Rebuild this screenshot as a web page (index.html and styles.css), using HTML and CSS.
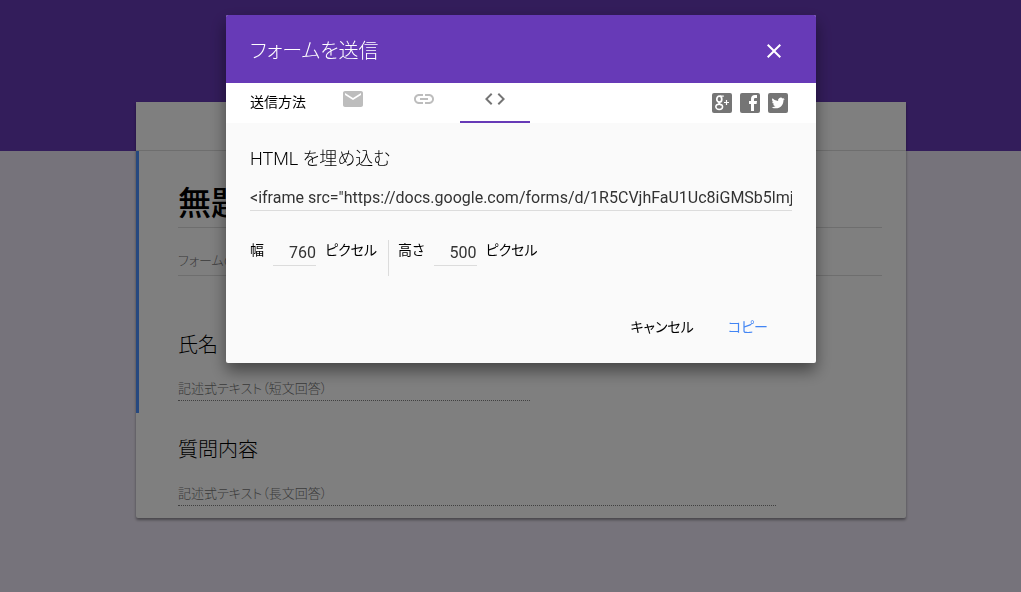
FILE: index.html
```html
<!DOCTYPE html>
<html lang="ja">
<head>
<meta charset="utf-8">
<title>フォームを送信</title>
<link rel="stylesheet" href="styles.css">
</head>
<body>
<main class="page">
  <div class="banner"></div>
  <div class="card">
    <div class="card-head"></div>
    <section class="section section-active">
      <input class="form-title" type="text" value="無題のフォーム" aria-label="フォームのタイトル">
      <input class="form-desc" type="text" placeholder="フォームの説明" aria-label="フォームの説明">
      <h2 class="question">氏名</h2>
      <p class="answer answer-short">記述式テキスト（短文回答）</p>
    </section>
    <section class="section">
      <h2 class="question">質問内容</h2>
      <p class="answer answer-long">記述式テキスト（長文回答）</p>
    </section>
  </div>
</main>

<div class="overlay">
  <div class="dialog" role="dialog" aria-modal="true" aria-labelledby="dialog-title">
    <header class="dialog-head">
      <h1 class="dialog-title" id="dialog-title">フォームを送信</h1>
      <button class="close" type="button" aria-label="閉じる">
        <svg width="24" height="24" viewBox="0 0 24 24" fill="currentColor"><path d="M19 6.41L17.59 5 12 10.59 6.41 5 5 6.41 10.59 12 5 17.59 6.41 19 12 13.41 17.59 19 19 17.59 13.41 12z"/></svg>
      </button>
    </header>
    <div class="toolbar">
      <span class="toolbar-label">送信方法</span>
      <div class="tabs" role="tablist">
        <button class="tab" type="button" role="tab" aria-label="メール">
          <svg width="24" height="24" viewBox="0 0 24 24" fill="currentColor"><path d="M20 4H4c-1.1 0-2 .9-2 2v12c0 1.100.9 2 2 2h16c1.100 0 2-.9 2-2V6c0-1.100-.9-2-2-2zm0 4l-8 5-8-5V6l8 5 8-5v2z"/></svg>
        </button>
        <button class="tab" type="button" role="tab" aria-label="リンク">
          <svg width="24" height="24" viewBox="0 0 24 24" fill="currentColor"><path d="M3.900 12c0-1.710 1.390-3.100 3.100-3.100h4V7H7c-2.760 0-5 2.240-5 5s2.240 5 5 5h4v-1.900H7c-1.710 0-3.100-1.390-3.100-3.100zM8 13h8v-2H8v2zm9-6h-4v1.900h4c1.710 0 3.100 1.390 3.100 3.100s-1.390 3.100-3.100 3.100h-4V17h4c2.760 0 5-2.240 5-5s-2.240-5-5-5z"/></svg>
        </button>
        <button class="tab tab-active" type="button" role="tab" aria-selected="true" aria-label="HTML を埋め込む">
          <svg width="24" height="24" viewBox="0 0 24 24" fill="currentColor"><path d="M9.400 16.600L4.800 12l4.600-4.600L8 6l-6 6 6 6 1.400-1.400zm5.200 0l4.600-4.600-4.600-4.600L16 6l6 6-6 6-1.400-1.400z"/></svg>
        </button>
      </div>
      <div class="share">
        <a class="share-link" href="#" aria-label="Google+">
          <svg width="20" height="20" viewBox="0 0 20 20"><rect width="20" height="20" rx="2" fill="#757575"/><g fill="none" stroke="#fff"><ellipse cx="7.300" cy="6.200" rx="2.500" ry="3" stroke-width="1.700"/><path d="M8 3.200h3.800" stroke-width="1.200"/><path d="M7.500 9.200c-1.500 1 .2 1.800 1.600 2.600" stroke-width="1.500"/><ellipse cx="7.200" cy="13.800" rx="3.400" ry="2.600" stroke-width="1.500"/><path d="M14.500 7v5M12 9.500h5" stroke-width="1.200"/></g></svg>
        </a>
        <a class="share-link" href="#" aria-label="Facebook">
          <svg width="20" height="20" viewBox="0 0 20 20"><rect width="20" height="20" rx="2" fill="#757575"/><path fill="#fff" d="M11 18v-7H9V8h2V6c0-2.500 1.500-4 3.800-4H17v3h-1.500C14.500 5 14 5.400 14 6.300V8h3l-.4 3H14v7z"/></svg>
        </a>
        <a class="share-link" href="#" aria-label="Twitter">
          <svg width="20" height="20" viewBox="0 0 20 20"><rect width="20" height="20" rx="2" fill="#757575"/><path fill="#fff" transform="translate(3.600 3.400) scale(.55)" d="M23.950 4.570a10 10 0 0 1-2.820.77 4.960 4.960 0 0 0 2.160-2.720c-.95.55-2 .95-3.120 1.180a4.920 4.920 0 0 0-8.380 4.480A13.930 13.930 0 0 1 1.640 3.160a4.920 4.920 0 0 0 1.520 6.570 4.900 4.900 0 0 1-2.230-.61v.06a4.920 4.920 0 0 0 3.950 4.830 5 5 0 0 1-2.210.08 4.940 4.940 0 0 0 4.600 3.420A9.870 9.870 0 0 1 0 19.540a13.990 13.990 0 0 0 7.550 2.210c9.050 0 14-7.500 14-13.980 0-.21 0-.42-.02-.63a9.940 9.940 0 0 0 2.460-2.550z"/></svg>
        </a>
      </div>
    </div>
    <form class="dialog-body">
      <label class="embed-label" for="embed">HTML を埋め込む</label>
      <input class="embed" id="embed" type="text" readonly value="&lt;iframe src=&quot;https://docs.google.com/forms/d/1R5CVjhFaU1Uc8iGMSb5lmj">
      <div class="sizes">
        <div class="size">
          <label for="width">幅</label>
          <input class="size-input" id="width" type="text" value="760">
          <span>ピクセル</span>
        </div>
        <div class="size">
          <label for="height">高さ</label>
          <input class="size-input" id="height" type="text" value="500">
          <span>ピクセル</span>
        </div>
      </div>
      <div class="actions">
        <button class="action" type="button">キャンセル</button>
        <button class="action action-primary" type="button">コピー</button>
      </div>
    </form>
  </div>
</div>
</body>
</html>
```
FILE: styles.css
```css
* {
  box-sizing: border-box;
}

body {
  margin: 0;
  min-height: 100vh;
  background: #ede7f6;
  color: #000;
  font-family: Roboto, "Noto Sans CJK JP", sans-serif;
  font-size: 14px;
  font-weight: 300;
  font-feature-settings: "palt";
}

h1, h2, p {
  margin: 0;
  font-weight: 300;
}

input, button {
  margin: 0;
  padding: 0;
  border: 0;
  border-radius: 0;
  outline: 0;
  background: none;
  color: inherit;
  font: inherit;
  font-feature-settings: inherit;
}

button {
  cursor: pointer;
}

svg {
  display: block;
}

.page {
  padding-bottom: 24px;
}

.banner {
  height: 151px;
  background: #673ab7;
}

.card {
  width: calc(100% - 53px);
  max-width: 770px;
  margin: -49px auto 0;
  background: #fff;
  border-radius: 0 0 2px 2px;
  box-shadow: 0 2px 3px rgba(0, 0, 0, 0.4);
}

.page, .overlay {
  padding-left: 21px;
}

.banner {
  margin-left: -21px;
}

.card-head {
  height: 49px;
  border-bottom: 1px solid #dcdcdc;
}

.section {
  padding: 23px 24px 12px 39px;
  border-left: 3px solid transparent;
}

.section-active {
  padding-top: 28px;
  border-left-color: #4d90fe;
}

.form-title {
  display: block;
  width: 100%;
  height: 49px;
  padding-bottom: 4px;
  border-bottom: 1px solid #dcdcdc;
  font-size: 33px;
  font-weight: 500;
}

.form-desc {
  display: block;
  width: 100%;
  height: 31px;
  margin-top: 17px;
  border-bottom: 1px solid #dcdcdc;
  font-size: 13px;
}

.form-desc::placeholder {
  color: #757575;
}

.question {
  font-size: 20px;
  line-height: 28px;
}

.section-active .question {
  margin-top: 55px;
}

.answer {
  margin-top: 18px;
  border-bottom: 1px dotted #808080;
  color: #757575;
  font-size: 13px;
  line-height: 23px;
}

.answer-short {
  max-width: 352px;
}

.answer-long {
  max-width: 598px;
}

.overlay {
  position: fixed;
  inset: 0;
  padding-top: 15px;
  overflow: auto;
  background: rgba(0, 0, 0, 0.5);
}

.dialog {
  width: calc(100% - 32px);
  max-width: 590px;
  margin: 0 auto;
  overflow: hidden;
  background: #fafafa;
  border-radius: 2px;
  box-shadow: 0 8px 16px rgba(0, 0, 0, 0.45);
}

.dialog-head {
  display: flex;
  align-items: center;
  justify-content: space-between;
  padding: 24px 30px 20px 24px;
  background: #673ab7;
  color: #fff;
}

.dialog-title {
  font-size: 20px;
  line-height: 24px;
}

.toolbar {
  display: flex;
  align-items: center;
  height: 40px;
  padding: 0 28px 0 24px;
  background: #fff;
}

.toolbar-label {
  padding-bottom: 2px;
  font-weight: 400;
  line-height: 20px;
}

.tabs {
  display: flex;
  gap: 1px;
  align-self: stretch;
  margin-left: 12px;
}

.tab {
  display: flex;
  justify-content: center;
  width: 70px;
  padding-top: 4px;
  border-bottom: 2px solid transparent;
  color: #bdbdbd;
}

.tab-active {
  border-bottom-color: #673ab7;
  color: #757575;
}

.share {
  display: flex;
  gap: 8px;
  margin-left: auto;
}

.dialog-body {
  padding: 24px 24px 18px;
  font-weight: 400;
}

.embed-label {
  display: block;
  font-size: 18px;
  font-weight: 300;
  line-height: 24px;
}

.embed {
  display: block;
  width: 100%;
  height: 26px;
  margin-top: 14px;
  border-bottom: 1px solid #dcdcdc;
  color: #333;
  font-size: 16px;
}

.sizes {
  display: flex;
  margin-top: 29px;
}

.size {
  display: flex;
  gap: 9px;
  height: 36px;
  line-height: 21px;
}

.size + .size {
  margin-left: 11px;
  padding-left: 9px;
  border-left: 1px solid #dcdcdc;
}

.size-input {
  width: 43px;
  height: 26px;
  border-bottom: 1px solid #dcdcdc;
  color: #333;
  font-size: 16px;
  text-align: right;
}

.actions {
  display: flex;
  justify-content: flex-end;
  gap: 34px;
  margin-top: 32px;
  padding-right: 24px;
}

.action {
  height: 36px;
  margin-bottom: 1px;
}

.action-primary {
  color: #4285f4;
}
```
